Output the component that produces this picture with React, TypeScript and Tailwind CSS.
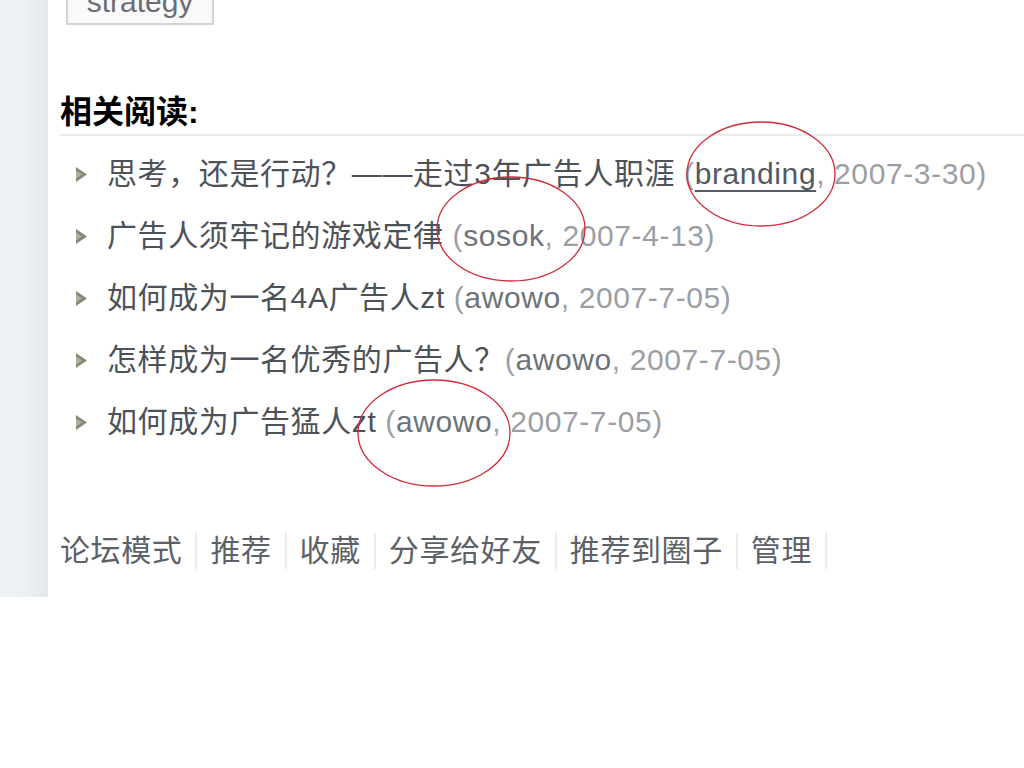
import React from 'react';

const items = [
  { title: '思考，还是行动？——走过3年广告人职涯 ', author: 'branding', date: '2007-3-30', link: true },
  { title: '广告人须牢记的游戏定律 ', author: 'sosok', date: '2007-4-13' },
  { title: '如何成为一名4A广告人zt ', author: 'awowo', date: '2007-7-05' },
  { title: '怎样成为一名优秀的广告人？', author: 'awowo', date: '2007-7-05' },
  { title: '如何成为广告猛人zt ', author: 'awowo', date: '2007-7-05' },
];

const actions = ['论坛模式', '推荐', '收藏', '分享给好友', '推荐到圈子', '管理'];

function Bullet() {
  return (
    <svg width="13" height="17" viewBox="0 0 13 17" className="shrink-0">
      <polygon points="1,1 12,8.5 1,16" fill="#858a77" />
      <polygon points="1,4.5 7,8.5 1,12.5" fill="#adb29d" />
    </svg>
  );
}

export default function App() {
  return (
    <div
      className="relative w-[1024px] h-[768px] overflow-hidden bg-white"
      style={{ fontFamily: '"Liberation Sans", "Noto Sans CJK SC", sans-serif' }}
    >
      <div className="flex h-[597px]">
        <div className="w-[48px] shrink-0 bg-gradient-to-r from-[#eff2f4] via-[#eef1f3] to-[#e4e8eb]"></div>
        <div className="flex-1 flex flex-col pl-[12px]">
          <div className="pl-[6px]">
            <div className="mt-[-18px] w-[148px] h-[43px] border-2 border-[#d4d4d4] bg-[#f9f9f9] flex items-end justify-center pb-[6px] text-[30px] leading-none text-[#6a6e74]">
              strategy
            </div>
          </div>

          <div className="mt-[68px] text-[32px] leading-[38px] font-bold text-black">相关阅读:</div>
          <div className="mt-[3px] h-[2px] bg-[#ececec]"></div>

          <ul className="mt-[7px] flex flex-col">
            {items.map((it, i) => (
              <li key={i} className="flex items-center h-[62px] pl-[15px] gap-[19px]">
                <Bullet />
                <span className="text-[30px] leading-none whitespace-nowrap tracking-[0.6px]">
                  <span className="text-[#4d5259]">{it.title}</span>
                  <span className="text-[#9b9fa5]">(</span>
                  {it.link ? (
                    <span className="text-[#535961] underline decoration-[2px] underline-offset-[6px] decoration-[#565c64]">{it.author}</span>
                  ) : (
                    <span className="text-[#6e737a]">{it.author}</span>
                  )}
                  <span className="text-[#9b9fa5]">, {it.date})</span>
                </span>
              </li>
            ))}
          </ul>

          <div className="mt-[80px] flex items-center">
            {actions.map((a) => (
              <div key={a} className="flex items-center">
                <span className="text-[30px] leading-none tracking-[0.6px] text-[#5c6168] whitespace-nowrap">{a}</span>
                <span className="mx-[13px] w-[2px] h-[36px] bg-[#ececec]"></span>
              </div>
            ))}
          </div>
        </div>
      </div>

      <svg className="absolute inset-0 pointer-events-none" width="1024" height="768">
        <ellipse cx="761" cy="174" rx="74" ry="52" fill="none" stroke="#d22a3a" strokeWidth="1.3" />
        <ellipse cx="511" cy="229" rx="74" ry="52" fill="none" stroke="#d22a3a" strokeWidth="1.3" />
        <ellipse cx="434" cy="433" rx="76" ry="53" fill="none" stroke="#d22a3a" strokeWidth="1.3" />
      </svg>
    </div>
  );
}
